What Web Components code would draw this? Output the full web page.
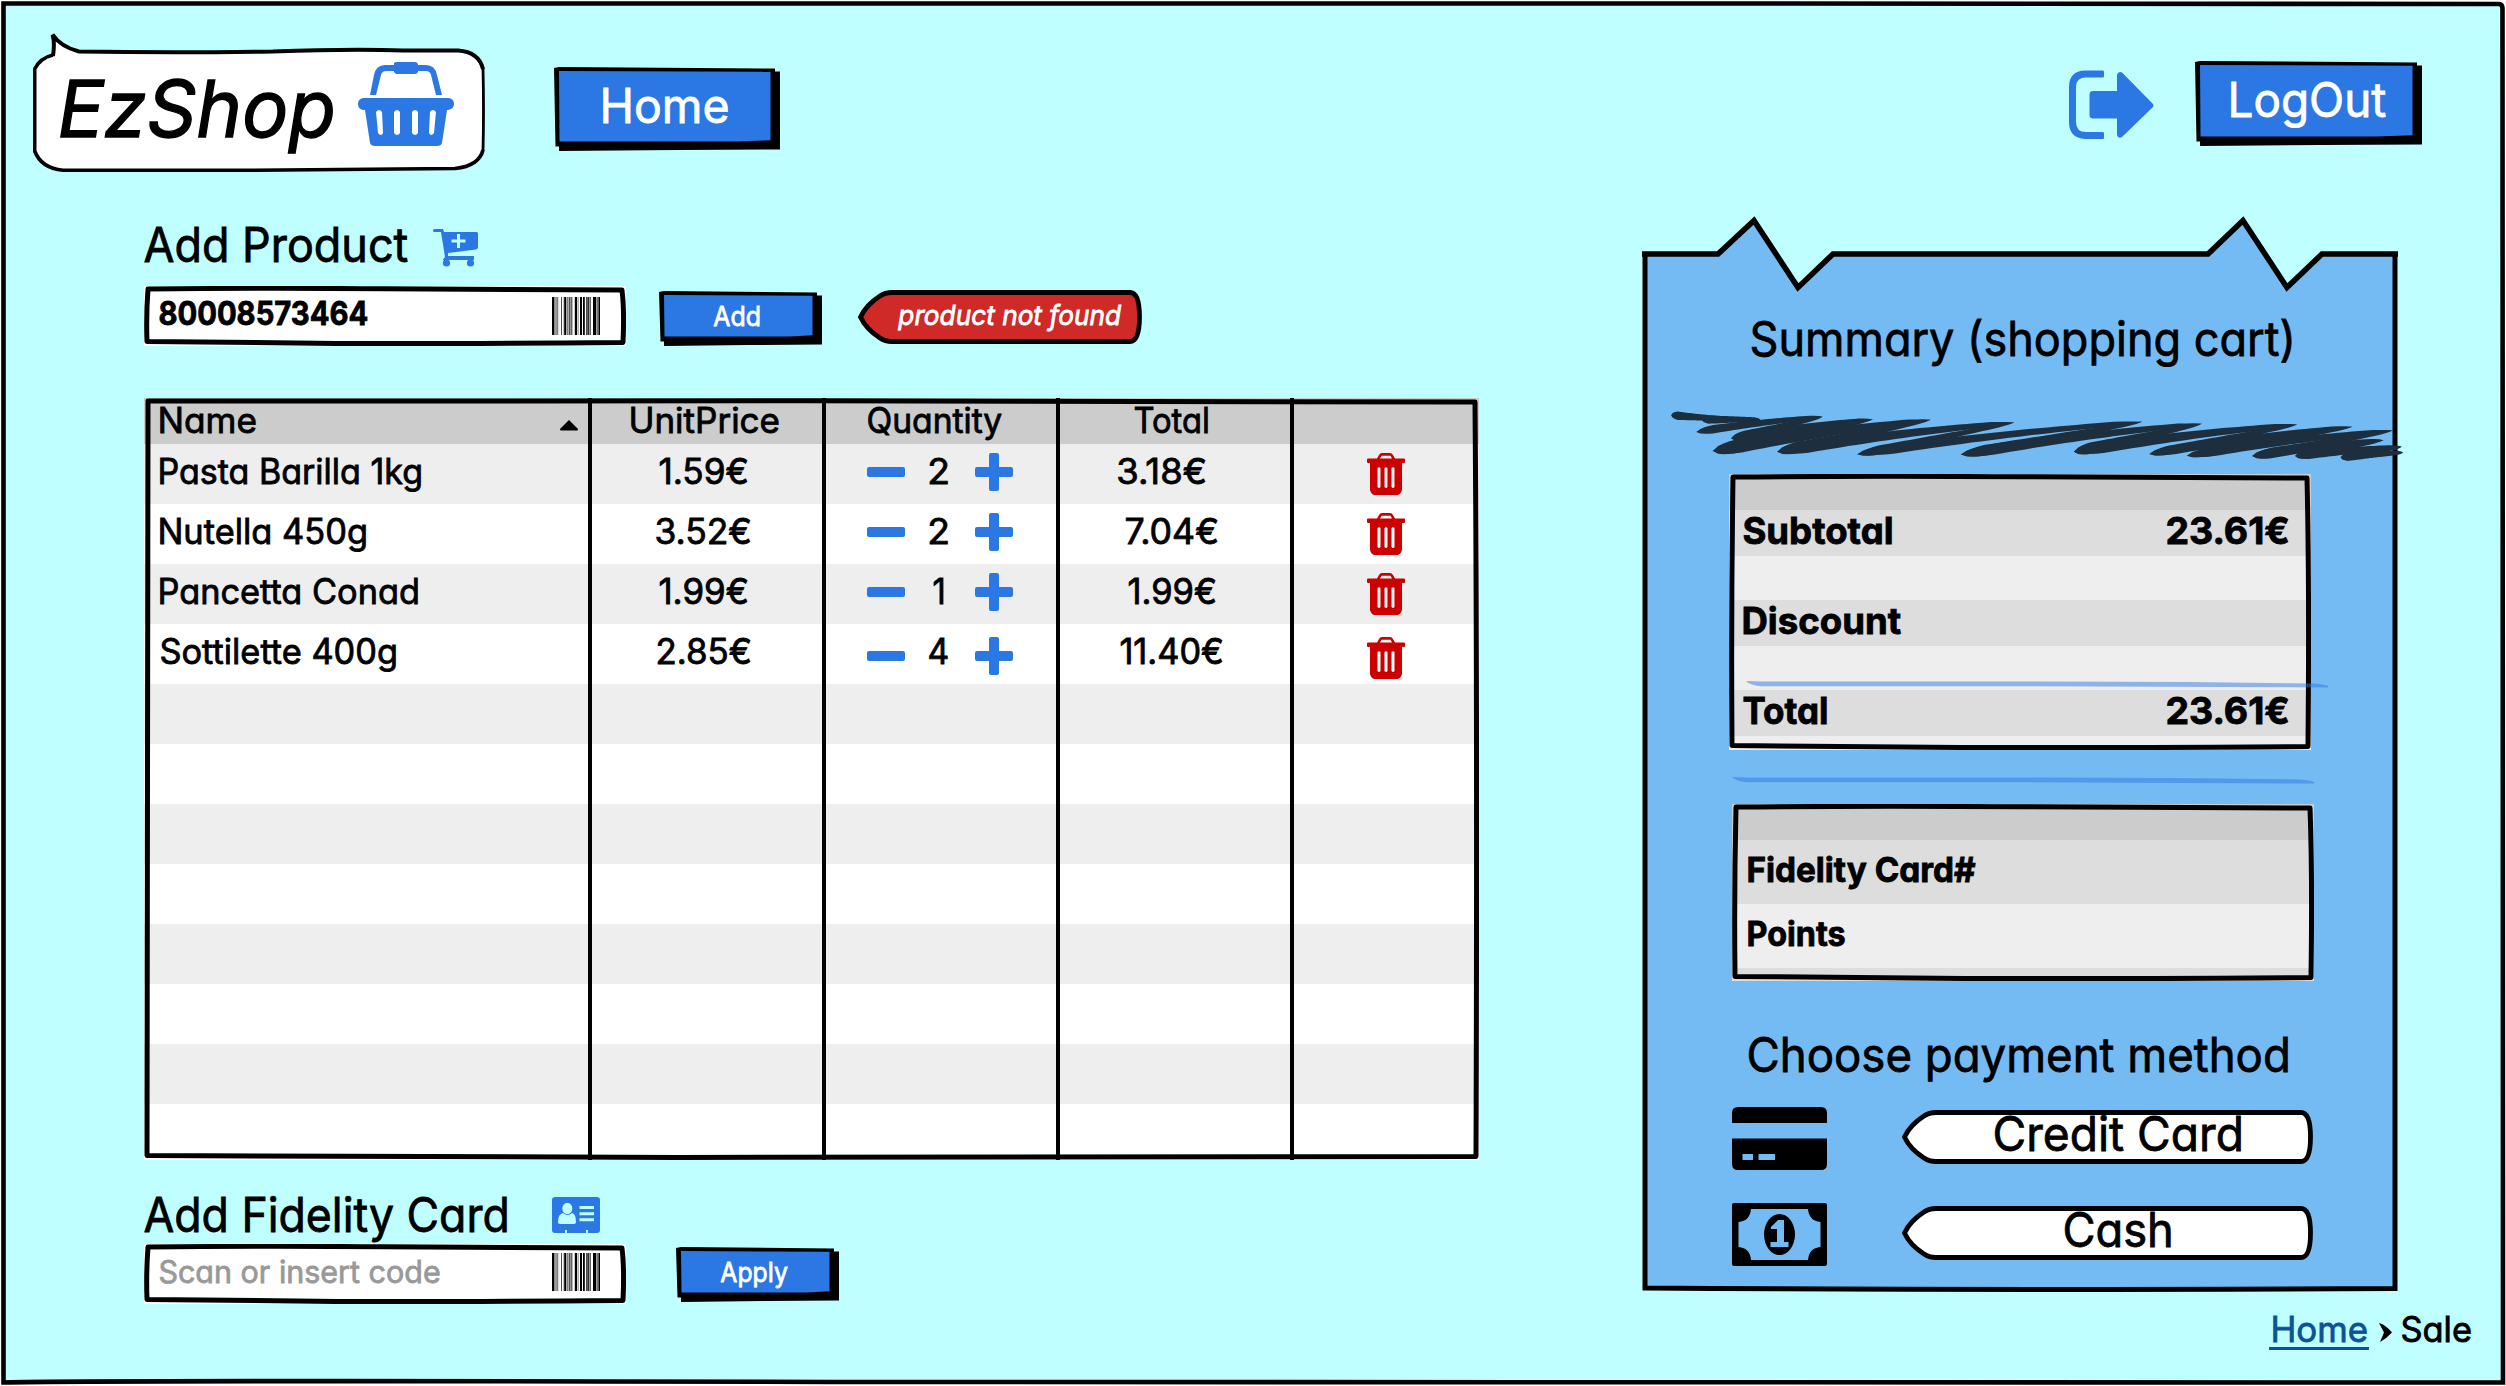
<!DOCTYPE html>
<html lang="en">
<head>
<meta charset="utf-8">
<title>EzShop - Sale</title>
<style>
html,body{margin:0;padding:0;background:#fff}
body{width:2506px;height:1386px;overflow:hidden;font-family:Inter,"Open Sans",sans-serif;color:#000}
</style>
</head>
<body>
<ez-page></ez-page>
<script>
const ctx = document.createElement('canvas').getContext('2d');
const define = (name, html, setup) => {
  const t = document.createElement('template');
  customElements.define(name, class extends HTMLElement {
    connectedCallback() {
      if (this.shadowRoot) return;
      const root = this.attachShadow({ mode: 'open' });
      t.innerHTML = typeof html === 'function' ? html(this) : html;
      root.append(t.content.cloneNode(true));
      if (setup) setup(this, root);
    }
  });
};

/* A single line of text whose ink is fitted to the width "w". */
define('ez-text', `<style>
  :host{display:block;flex:none;white-space:nowrap;line-height:1;font-feature-settings:"cv11","calt" 0}
  span{display:inline-block;position:relative;top:.8px;transform-origin:0 0;-webkit-text-stroke:var(--ink,.8px) currentColor;stroke-linejoin:round;paint-order:stroke}
</style><span></span>`, (el, root) => {
  const w = +el.getAttribute('w'), size = +el.getAttribute('s') || 35, span = root.querySelector('span');
  const weight = el.hasAttribute('b') ? 700 : 400, style = el.hasAttribute('i') ? 'italic' : 'normal';
  span.textContent = el.getAttribute('t');
  el.style.cssText += `;width:${w}px;height:${size}px;font-size:${size}px;font-weight:${weight};font-style:${style}`;
  ctx.font = `${style} ${weight} ${size}px Inter`;
  /* the single-storey "a" is as wide as a "q" */
  const m = ctx.measureText(span.textContent.replace(/a/g, 'q'));
  const left = -m.actualBoundingBoxLeft, ink = m.actualBoundingBoxRight - left;
  const k = w / (ink + .8);
  span.style.transform = `translateX(${-(left - .4) * k}px) scaleX(${k})`;
});

/* Hand-drawn rectangular outline laid over the content. */
const outline = (w, h) => `<svg class="o" width="${w}" height="${h}" viewBox="0 0 ${w} ${h}"><path d="M4 3Q${w*.25} 1.8 ${w*.5} 2.8T${w-4} 4Q${w-1.500} ${h*.4} ${w-3} ${h-3.5}Q${w*.6} ${h-2} ${w*.4} ${h-2.6}T3 ${h-4.5}Q2 ${h*.5} 4 3Z" fill="none" stroke="#000" stroke-width="5" stroke-linejoin="round"/></svg>`;
const oCss = '.o{position:absolute;left:0;top:0;pointer-events:none}';

define('ez-button', el => {
  const w = +el.getAttribute('w'), h = +el.getAttribute('h');
  return `<style>:host{display:flex;flex:none;width:${w}px;height:${h}px;position:relative;justify-content:center;color:#fff;box-sizing:border-box}svg{position:absolute;left:0;top:0}.c{position:relative}</style>
  <svg width="${w}" height="${h}" viewBox="0 0 ${w} ${h}"><path d="M0 1L5 0 ${w-5} 1.5V4.500H${w}V${h-1.500}L${w*.55} ${h-1} 5 ${h}V${h-4.500}H1.500Z"/><path d="M5 4L${w-9.500} 4.700V${h-10.700}L${w*.8} ${h-9.500} 5.500 ${h-9.500}Z" fill="#2b78e4"/></svg>
  <div class="c"><slot></slot></div>`;
});

define('ez-tag', el => {
  const w = +el.getAttribute('w'), f = el.getAttribute('fill') || '#fff';
  return `<style>:host{display:block;flex:none;width:${w}px;height:54px;position:relative}svg{position:absolute;left:0;top:0}.c{position:relative;display:flex}</style>
  <svg width="${w}" height="54" viewBox="0 0 ${w} 54"><path d="M2.500 27Q8 15 22 6Q27 2.500 34 2.500H${w-12}Q${w-2.500} 2.500 ${w-2.500} 27T${w-12} 51.500H34Q27 51.500 22 48Q8 39 2.500 27Z" fill="${f}" stroke="#000" stroke-width="4.800"/></svg>
  <div class="c"><slot></slot></div>`;
});

define('ez-barcode', () => {
  const bars = [[0,2.4],[2.8,1,.5],[4.6,.9],[6.6,.5,.4],[9.2,.7],[11,.5,.5],[12.2,2],[14.4,.4,.4],[15.5,.8],[17,1.6,.7],[19,1.5,.6],[22.8,2.2],[25.8,.5],[28,2],[31,1.8],[34,.7],[35.4,1.4],[37.6,1],[41,3],[44.4,1.5,.6],[46.4,1.6]];
  return `<style>:host{display:block;flex:none;width:48px;height:38px}svg{display:block}</style><svg width="48" height="38">${bars.map(b=>`<rect x="${b[0]}" width="${b[1]}" height="38" fill-opacity="${b[2]||1}"/>`).join('')}</svg>`;
});

define('ez-field', el => {
  const w = +el.getAttribute('w');
  return `<style>:host{display:flex;flex:none;width:${w}px;height:60px;position:relative;background:#fff;box-sizing:border-box;padding-left:15px;justify-content:space-between}${oCss}ez-barcode{margin:${el.getAttribute('bar')||11}px ${w-456}px 0 0}</style>
  <slot></slot><ez-barcode></ez-barcode>${outline(w,60)}`;
});

const icons = {
  basket: [96,84,`<g fill="#2b78e4"><path d="M12 33L16 13Q18 3 27 3H36V1Q37 0 39 0H57Q59 0 60 2V3H68Q77 3 79 13L84 33H78L73 13Q72 9 68 9H60V10Q59 12 57 12H39Q37 12 36 10V9H28Q24 9 23 13L18 33Z"/><path fill-rule="evenodd" d="M5 36H91Q96 37 96 42T90 48H89L84 81Q83 84 79 84H17Q13 84 12 81L7 48H5Q0 47 0 42T5 36ZM18 50L20 71Q23 75 25 71L24 50Q21 46 18 50ZM36 50V71Q39 75 42 71V50Q39 46 36 50ZM54 50V71Q57 75 60 71V50Q57 46 54 50ZM72 50L71 71Q73 75 76 71L78 50Q75 46 72 50Z"/></g>`],
  logout: [85,70,`<g fill="#2b78e4"><path d="M34 0.500Q35 .5 35 2V6Q35 7.500 34 7.500H17Q7 7.500 7 17V52Q7 62 17 62H34Q35 62 35 63.500V67.500Q35 69 34 69H16Q0 68 0 52V17Q0 1 16 .5Z"/><path d="M24 21H48V5Q49 1 53 2.500L84 34Q85 35.500 84 37L53 67Q49 69 48 65V48.500H24Q20.500 48.500 20.500 45V25Q20.500 21 24 21Z"/></g>`],
  cart: [46,38,`<g fill="#2b78e4"><path fill-rule="evenodd" d="M1.500 0H10L11 3H43.500Q45 3 45 4.500V18Q45 20 43 20.500L15 24V27H41V30.500H15L15.500 32H11Q10 30 12 28L8 3H1.500Q0 3 0 1.500T1.500 0ZM24 5V10.500H18.500V13.500H24V19H27V13.500H32.500V10.500H27V5Z"/><circle cx="13.500" cy="34" r="3.600"/><circle cx="37.500" cy="34" r="3.600"/><path d="M10 30H41V31H10Z"/></g>`],
  idcard: [48,36,`<path fill="#2b78e4" d="M3 0H45Q48 0 48 3V33Q48 36 45 36H36V33H34V36H15V33H13V36H3Q0 36 0 33V3Q0 0 3 0Z"/><g fill="#c0ffff"><ellipse cx="15.300" cy="11.500" rx="5" ry="5.800"/><path d="M11 16Q15.500 20 20 16Q24 17 24 25Q24 27 21 27H9Q6 27 6 25Q6 17 11 16ZM27.500 9H42V12H27.500ZM27.500 15.200H42V18.200H27.500ZM27.500 21.200H42V24.200H27.500Z"/></g>`],
  minus: [38,10,`<rect width="38" height="10" rx="2" fill="#2b78e4"/>`],
  plus: [38,38,`<path fill="#2b78e4" d="M14 2Q14 0 16 0H22Q24 0 24 2V14H36Q38 14 38 16V22Q38 24 36 24H24V36Q24 38 22 38H16Q14 38 14 36V24H2Q0 24 0 22V16Q0 14 2 14H14Z"/>`],
  trash: [38,42,`<path fill="#c00" fill-rule="evenodd" d="M1 5.500H10L12 2Q13 0 15 0H23Q25 0 26 2L28 5.500H37Q38 5.500 38 6.500V9Q38 10 37 10H35V37Q34 41 31 42H7Q4 41 3 37V10H1Q0 10 0 9V6.500Q0 5.500 1 5.500ZM13 5.500H25L23.500 2.800H14.500ZM10.500 15V34Q12 36 13.500 34V15Q12 13.500 10.500 15ZM17.500 15V34Q19 36 20.500 34V15Q19 13.500 17.500 15ZM24.500 15V34Q26 36 27.500 34V15Q26 13.500 24.500 15Z"/>`],
  credit: [95,63,`<path fill-rule="evenodd" d="M6 0H89Q95 0 95 6V16H0V6Q0 0 6 0ZM0 31.500H95V57Q95 63 89 63H6Q0 63 0 57ZM10.500 47V53H21V47ZM26.500 47V53H43V47Z"/>`],
  cash: [95,63,`<path fill-rule="evenodd" d="M2 0H93Q95 0 95 2V61Q95 63 93 63H2Q0 63 0 61V2Q0 0 2 0ZM19 6Q18 18 6.500 19V44Q18 45 19 57H76Q77 45 88.500 44V19Q77 18 76 6Z"/><ellipse cx="47.500" cy="31.500" rx="15.500" ry="20.500"/><path d="M46 17H52V39H56.500V44H38.500V39H45V26H39Q38 24 41 22Z" fill="#75bbf3"/>`]
};
define('ez-icon', el => {
  const [w,h,p] = icons[el.getAttribute('n')];
  return `<style>:host{display:block;flex:none;width:${w}px;height:${h}px}svg{display:block}</style><svg width="${w}" height="${h}" viewBox="0 0 ${w} ${h}">${p}</svg>`;
});

define('ez-logo', `<style>:host{display:flex;flex:none;width:453px;height:141px;position:relative;box-sizing:border-box;padding:36px 0 0 27px}
  .b{position:absolute;left:0;top:0}ez-text{--ink:1.3px;position:relative}ez-icon{position:relative;margin:-6px 0 0 25px}</style>
  <svg class="b" width="453" height="141" viewBox="0 0 453 141"><path d="M20 24Q22 10 19 3Q28 14 46 19.500Q140 21 240 19.500Q320 16.500 370 18.500H425Q448 20 450.500 37V118Q446 134 422 136.500L220 138.500H30Q8 136 1.500 119V37Q5 28 20 24Z" fill="#fff"/>
  <path d="M20 24Q22 10 19.500 2.500Q28 15 46 19.500Q140 21 240 19.500Q320 16.500 370 18.500H425Q446 20 450 37" fill="none" stroke="#000" stroke-width="4"/><path d="M450 36Q451 80 450 119" fill="none" stroke="#000" stroke-width="2.800"/><path d="M450 118Q446 134 422 136.500L220 138.300H30Q8 136 1.700 119V37Q7 26 20 23" fill="none" stroke="#000" stroke-width="3.600"/></svg>
  <ez-text t="EzShop" w="273" s="79" i></ez-text><ez-icon n="basket"></ez-icon>`);

define('ez-header', `<style>:host{display:flex;align-items:flex-start;height:217px;box-sizing:border-box;padding-left:33px}
  ez-logo{margin-top:32px}.h{margin:67px 0 0 68px}.x{margin:70px 0 0 auto}.l{margin:61px 84px 0 41px}</style>
  <ez-logo></ez-logo>
  <ez-button class="h" w="226" h="84"><ez-text style="margin:14.500px 0 0 -3px" t="Home" w="125" s="48"></ez-text></ez-button>
  <ez-icon class="x" n="logout"></ez-icon>
  <ez-button class="l" w="227" h="85"><ez-text style="margin-top:14.500px" t="LogOut" w="155" s="48"></ez-text></ez-button>`);

const rows = [['Pasta Barilla 1kg',261,'1.59€',69,89,'2','3.18€',60,88],['Nutella 450g',206,'3.52€',66,95,'2','7.04€',67,93],['Pancetta Conad',258,'1.99€',69,89,'1','1.99€',70,88],['Sottilette 400g',236,'2.85€',67,94,'4','11.40€',62,103]];
define('ez-table', `<style>
  :host{display:block;width:1335px;height:762px;position:relative;background:#eee;overflow:hidden}
  .r{display:grid;grid-template-columns:446px 234px 234px 234px 187px;height:60px}
  .r:nth-of-type(even){background:#eee}.r:nth-of-type(odd){background:#fff}
  .r.h{height:46px;background:#ccc}
  .c{display:flex;align-items:flex-start;border-right:4px solid #000;margin-right:-2px;position:relative;padding-top:9px;box-sizing:border-box}
  .c:last-child{border:0;margin:0}.h .c{padding-top:4px}
  .n{padding-left:16px}.q{padding-left:43px}.q .m{margin-top:14px}
  .q ez-icon:last-child{margin-left:auto;margin-right:43px}
  .late ez-icon{transform:translateY(4px)}
  ${oCss}</style>
  <div class="r h"><div class="c n"><ez-text t="Name" w="96"></ez-text><svg style="margin:18px 0 0 304px" width="18" height="11"><path d="M9 0L18 9Q18 10.500 17 10.500H1Q0 10.500 0 9Z"/></svg></div>
  <div class="c" style="padding-left:41px"><ez-text t="UnitPrice" w="148"></ez-text></div><div class="c" style="padding-left:44px"><ez-text t="Quantity" w="134"></ez-text></div><div class="c" style="padding-left:76px"><ez-text t="Total" w="74"></ez-text></div><div class="c"></div></div>
  ${rows.map((r,i)=>`<div class="r ${i==3?'late':''}"><div class="c n"><ez-text t="${r[0]}" w="${r[1]}"></ez-text></div>
  <div class="c" style="padding-left:${r[3]}px"><ez-text t="${r[2]}" w="${r[4]}"></ez-text></div>
  <div class="c q"><ez-icon class="m" n="minus"></ez-icon><ez-text style="margin:0 0 0 ${r[5]=='1'?28:24}px" t="${r[5]}" w="${r[5]=='1'?11:19}"></ez-text><ez-icon n="plus"></ez-icon></div>
  <div class="c" style="padding-left:${r[7]}px"><ez-text t="${r[6]}" w="${r[8]}"></ez-text></div>
  <div class="c" style="padding-left:75px"><ez-icon n="trash"></ez-icon></div></div>`).join('')}
  ${Array(8).fill('<div class="r"><div class="c"></div><div class="c"></div><div class="c"></div><div class="c"></div><div class="c"></div></div>').join('')}
  ${outline(1335,762)}`);

define('ez-left', `<style>:host{display:block;width:1335px;margin-left:144px}.t,.f{display:flex;align-items:flex-start}</style>
  <div class="t" style="height:69px;box-sizing:border-box;padding-top:3px"><ez-text t="Add Product" w="264" s="48"></ez-text><ez-icon style="margin:9px 0 0 25px" n="cart"></ez-icon></div>
  <div class="f" style="height:112px"><ez-field w="482"><ez-text style="margin-top:11.500px" t="80008573464" w="209" s="32" b></ez-text></ez-field>
  <ez-button style="margin:5px 0 0 33px" w="163" h="55"><ez-text style="margin:11.500px 0 0 -8px" t="Add" w="47" s="27"></ez-text></ez-button>
  <ez-tag style="margin:4px 0 0 36px" w="284" fill="#cf2a27"><ez-text style="margin:11px 0 0 39px;color:#fff" t="product not found" w="225" s="27" i></ez-text></ez-tag></div>
  <ez-table></ez-table>
  <div class="t" style="height:84px;box-sizing:border-box;padding-top:30.500px"><ez-text t="Add Fidelity Card" w="363" s="48"></ez-text><ez-icon style="margin:6.500px 0 0 45px" n="idcard"></ez-icon></div>
  <div class="f"><ez-field w="482" bar="9"><ez-text style="margin-top:11.700px;color:#999" t="Scan or insert code" w="281" s="31"></ez-text></ez-field>
  <ez-button style="margin:3px 0 0 50px" w="163" h="55"><ez-text style="margin:11.500px 0 0 -8px" t="Apply" w="68" s="27"></ez-text></ez-button></div>`);

define('ez-scribble', () => {
  const s = [[95,681,192,681,4.5],[152,694,262,684,4.5],[142,731,378,676,4.5],[207,751,472,684,5],[173,792,580,685,7.500],[293,793,736,693,6.500],[443,799,975,691,5],[636,801,1086,697,6],[847,793,1264,699,6.500],[988,798,1367,706,5],[1058,803,1443,717,5],[1180,805,1425,746,5.500],[1260,804,1459,766,5],[1345,808,1462,783,4.500]];
  const X = v => (v-95)/1.8667, Y = v => (v-669)/3;
  const band = (x0,y0,x1,y1,r,bow,tail) => {
    const up = [], lo = [];
    for (let i = 0; i <= 30; i++) {
      const t = i/30, cx = (x0+x1)/2, cy = y0+(y1-y0)*bow;
      const x = (1-t)*(1-t)*x0+2*t*(1-t)*cx+t*t*x1, y = (1-t)*(1-t)*y0+2*t*(1-t)*cy+t*t*y1;
      const h = Math.min(1, Math.sqrt(t/.12)) * Math.min(1, Math.sqrt((1-t)/.1)) * (r*(1-t)+tail*t);
      up.push(`${x.toFixed(1)} ${(y-h).toFixed(1)}`); lo.unshift(`${x.toFixed(1)} ${(y+h).toFixed(1)}`);
    }
    return `<path d="M${up.join('L')}L${lo.join('L')}Z"/>`;
  };
  let out = '';
  s.forEach(([a,b,c,e,r],i) => {
    const n = s[i+1];
    out += band(X(a),Y(b)-r*.4,X(c),Y(e)+1.500,r,.66,2);
    if (n && i > 1) out += band(X(n[0]),Y(n[1])-n[4]*.4,X(c),Y(e)+1.500,n[4],.5,1.500);
  });
  return `<style>:host{display:block;width:732px;height:48px;position:relative}svg{display:block;overflow:visible}</style><svg width="732" height="48" fill="#1d2f3e">${out}</svg>`;
});

define('ez-rule', `<style>:host{display:block;width:582px;height:7px}svg{display:block}</style><svg width="582" height="7"><path d="M0 0L15 .5 290 .5 440 1 567 2.500Q580 3.500 582 5V6.500L290 5.200H15Q3 4 0 0Z" fill="#2b78e4" fill-opacity=".5"/></svg>`);

define('ez-box', el => { const h = +el.getAttribute('h'); return `<style>:host{display:block;width:582px;height:${h}px;position:relative;overflow:hidden;background:#eee}${oCss}.h{height:36px;background:#ccc}</style><div class="h"></div><slot></slot>${outline(582,h)}`; });

define('ez-line', el => `<style>:host{display:flex;align-items:flex-start;justify-content:space-between;height:${el.getAttribute('h')}px;background:${el.getAttribute('bg')};box-sizing:border-box;padding:0 22px 0 ${el.getAttribute('x')||14}px}</style><slot></slot>`);

define('ez-summary', `<style>:host{display:block;width:756px;height:1076px;position:relative;box-sizing:border-box;padding-top:98px}.bg{position:absolute;left:0;top:0}
  .in{position:relative}.pay{display:flex;align-items:flex-start;margin-left:90px}.pay ez-tag{margin:3px 0 0 75px}.over{position:absolute;left:104px;top:367px}</style>
  <svg class="bg" width="756" height="1076" viewBox="0 0 756 1076"><path d="M2 38H77L112 5 156 72 190 38H566L601 5 645 72 680 38H753Q754 300 752.500 600V1072.500Q400 1074 3 1072Q1 500 3 38Z" fill="#75bbf3"/><path d="M3 38Q1 500 3 1072Q350 1074.500 753 1072.500Q751 600 753 38" fill="none" stroke="#000" stroke-width="5"/><path d="M0 38H76L112 4.500 156 71.500 191 38H566L601 4.500 645 71.500 680 38H756" fill="none" stroke="#000" stroke-width="5.600"/></svg>
  <div class="in">
  <ez-text style="margin-left:109px" t="Summary (shopping cart)" w="541" s="48"></ez-text>
  <ez-scribble style="margin:51px 0 0 29px"></ez-scribble>
  <ez-box style="margin:13px 0 0 87px" h="276">
   <ez-line h="46" bg="#ddd"><ez-text style="margin-top:1px" t="Subtotal" w="149" s="37" b></ez-text><ez-text style="margin-top:1px" t="23.61€" w="123" s="37" b></ez-text></ez-line>
   <ez-line h="44" bg="#eee"></ez-line>
   <ez-line h="46" bg="#ddd"><ez-text style="margin-top:1px" t="Discount" w="158" s="37" b></ez-text></ez-line>
   <ez-line h="44" bg="#eee"></ez-line>
   <ez-line h="46" bg="#ddd"><ez-text style="margin-top:1px" t="Total" w="84" s="37" b></ez-text><ez-text style="margin-top:1px" t="23.61€" w="123" s="37" b></ez-text></ez-line>
  </ez-box>
  <ez-rule class="over"></ez-rule>
  <ez-rule style="margin:27px 0 0 90px"></ez-rule>
  <ez-box style="margin:20px 0 0 90px" h="177">
   <ez-line h="64" bg="#ddd" x="16"><ez-text style="margin-top:12px" t="Fidelity Card#" w="228" s="34" b></ez-text></ez-line>
   <ez-line h="64" bg="#eee" x="16"><ez-text style="margin-top:12px" t="Points" w="97" s="34" b></ez-text></ez-line>
   <ez-line h="20" bg="#ddd"></ez-line>
  </ez-box>
  <ez-text style="margin:49.500px 0 0 106px" t="Choose payment method" w="540" s="48"></ez-text>
  <div class="pay" style="margin-top:28.500px"><ez-icon n="credit"></ez-icon><ez-tag w="411"><ez-text style="margin:-.5px 0 0 92px" t="Credit Card" w="247" s="48"></ez-text></ez-tag></div>
  <div class="pay" style="margin-top:33px"><ez-icon n="cash"></ez-icon><ez-tag w="411"><ez-text style="margin:-.5px 0 0 162px" t="Cash" w="107" s="48"></ez-text></ez-tag></div>
  </div>`);

define('ez-crumbs', `<style>:host{display:flex;justify-content:flex-end;align-items:flex-start;padding-right:35px}
  a{color:#0b5394;border-bottom:3px solid #0b5394;padding:0 2px 1px 4px;height:35px;display:block}svg{margin:12px 9px 0 10px;flex:none}</style>
  <a><ez-text t="Home" w="94"></ez-text></a><svg width="13" height="19"><path d="M0 0Q7 2 13 9.500Q7 16 1 19L5 9.500Z"/></svg><ez-text t="Sale" w="70"></ez-text>`);

define('ez-page', `<style>:host{display:block;width:2506px;height:1386px;position:relative;background:#c0ffff;overflow:hidden}
  .frame{position:absolute;left:0;top:0}main{display:flex;align-items:flex-start;position:relative;height:1094px}ez-summary{margin:-1px 0 0 163px}</style>
  <svg class="frame" width="2506" height="1386" viewBox="0 0 2506 1386"><path d="M0 0H2506V1386H0ZM4 3V1382.500H2502.500V3Z" fill="#fff" fill-rule="evenodd"/><path d="M3.500 3.500Q900 2 1700 3.500T2499 4Q2502.500 4 2502.500 9Q2501 600 2503 1382.500Q1700 1384 900 1382T3.500 1382.500Q5 700 3.500 3.500Z" fill="none" stroke="#000" stroke-width="4.600"/></svg>
  <ez-header></ez-header>
  <main><ez-left></ez-left><ez-summary></ez-summary></main>
  <ez-crumbs></ez-crumbs>`);
</script>
</body>
</html>
